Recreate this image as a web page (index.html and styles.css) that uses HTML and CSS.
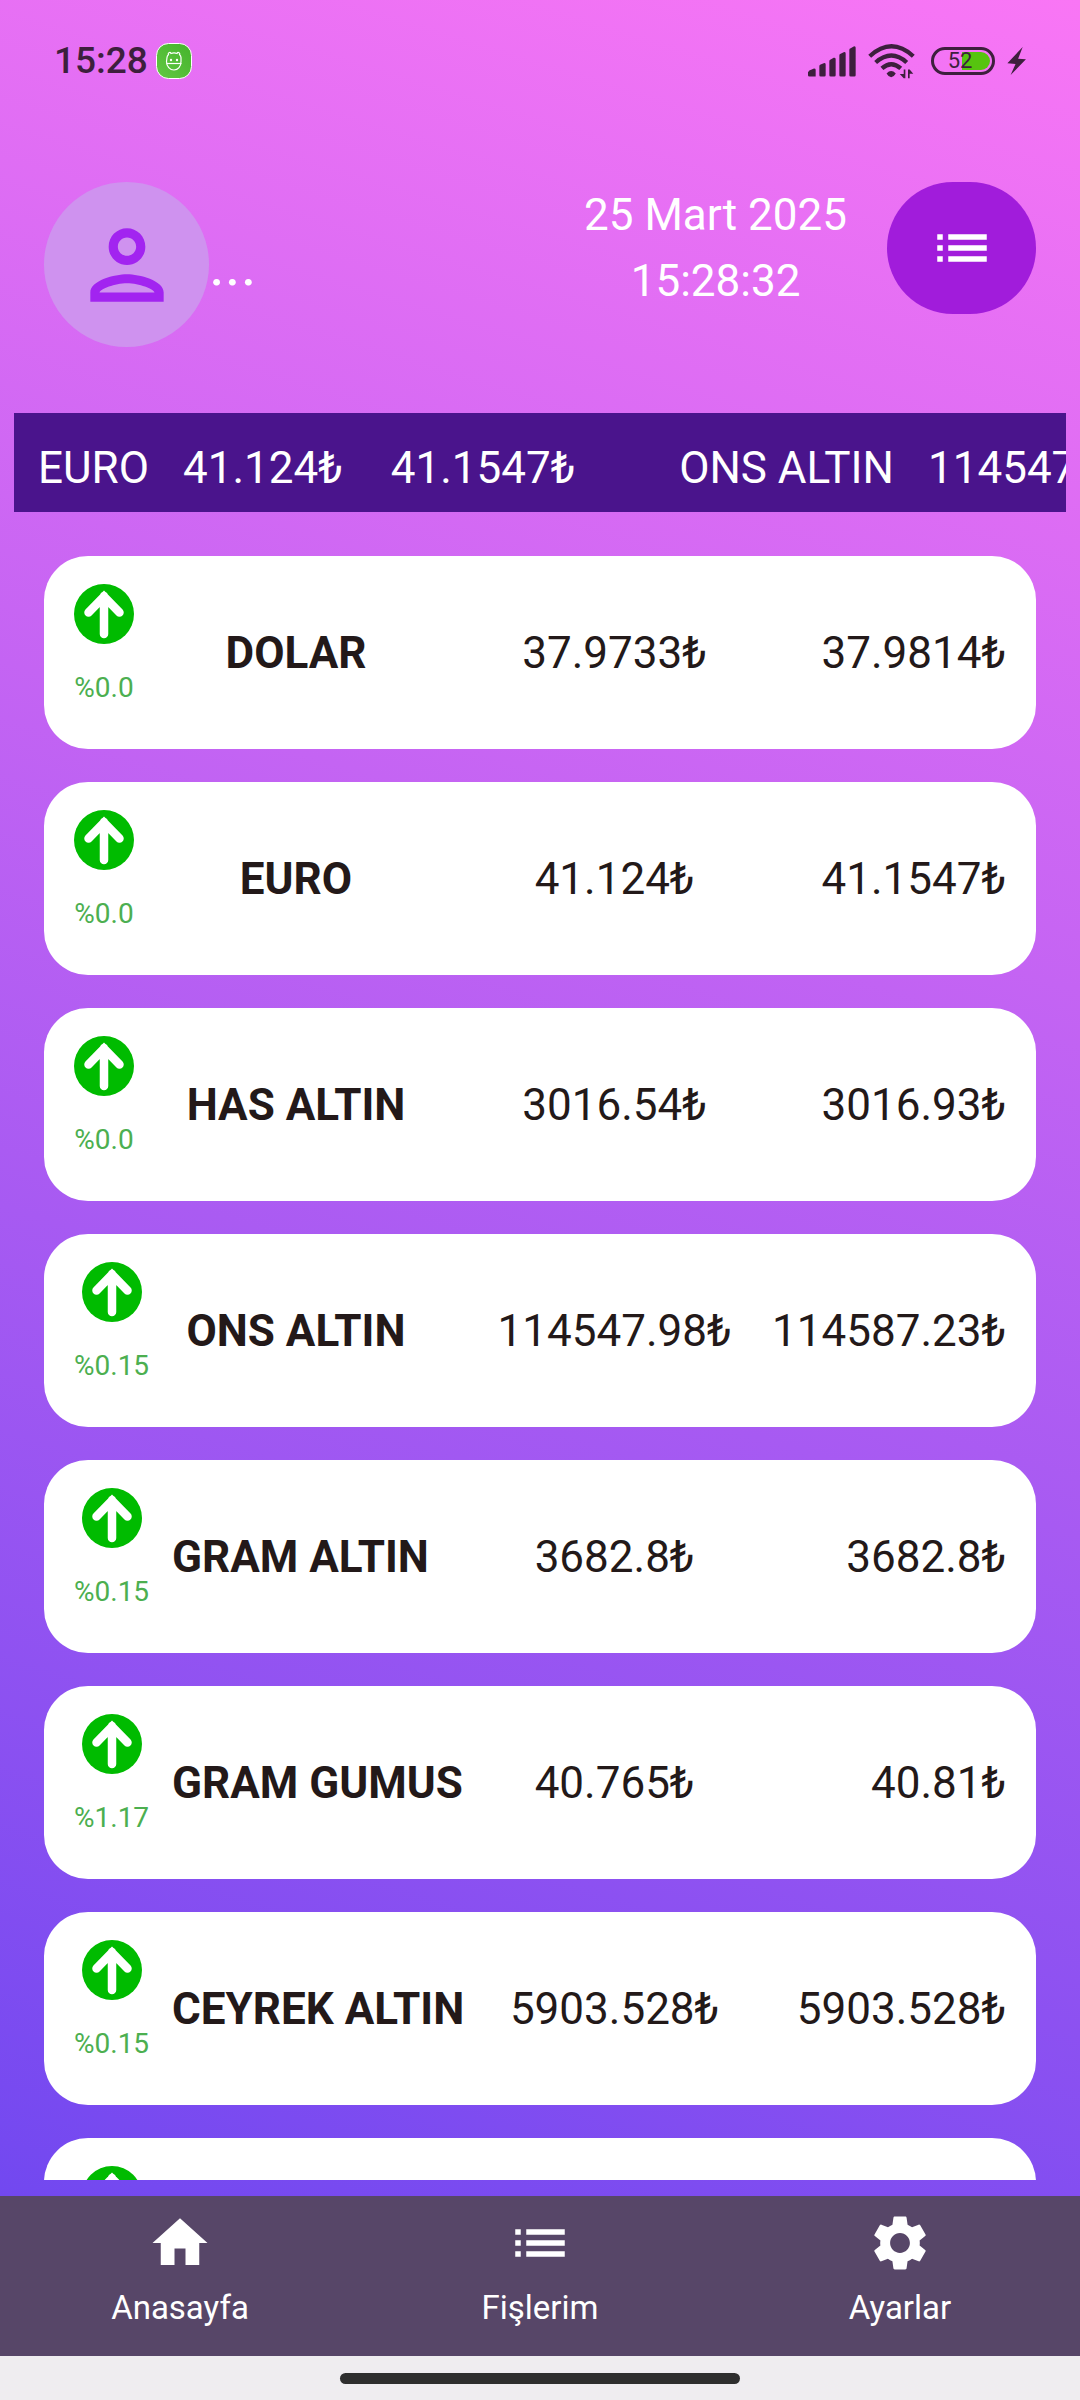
FILE: index.html
```html
<!DOCTYPE html>
<html lang="tr">
<head>
<meta charset="utf-8">
<meta name="viewport" content="width=device-width, initial-scale=1">
<title>Piyasalar</title>
<link rel="stylesheet" href="styles.css">
</head>
<body>
<svg class="defs" aria-hidden="true">
  <symbol id="icon-list" viewBox="0 0 24 24"><path d="M3 13h2v-2H3v2zm0 4h2v-2H3v2zm0-8h2V7H3v2zm4 4h14v-2H7v2zm0 4h14v-2H7v2zM7 7v2h14V7H7z"/></symbol>
  <symbol id="icon-up" viewBox="0 0 60 60"><circle cx="30" cy="30" r="30" fill="#00bb00"/><path d="M30 12v38M14.500 28.500 30 12.500l15.500 16" fill="none" stroke="#fff" stroke-width="8.500" stroke-linecap="round"/></symbol>
</svg>

<div class="screen">
  <div class="status-bar">
    <div class="status-group">
      <span class="status-time">15:28</span>
      <svg class="status-app" viewBox="0 0 36 36" aria-hidden="true">
        <defs><linearGradient id="app-green" x1="0" y1="1" x2="1" y2="0"><stop offset="0" stop-color="#62c843"/><stop offset="1" stop-color="#45b32c"/></linearGradient></defs>
        <rect x=".5" y=".5" width="35" height="35" rx="12" fill="url(#app-green)" stroke="#fff"/>
        <g fill="none" stroke="#fff" stroke-width="1.200"><path d="M11 14.500c0-1 1-2.500 1.500-3-1-1.500 1.500-3 2.500-1 1.500-.6 4.500-.6 6 0 1-2 3.500-.5 2.500 1 .5.5 1.500 2 1.500 3v4c0 5-3 8.500-7 8.500s-7.500-3.500-7.500-8.500z"/><path d="M10.500 20.500h15"/></g>
        <circle cx="15" cy="17" r="1.200" fill="#fff"/><circle cx="21" cy="17" r="1.200" fill="#fff"/>
      </svg>
    </div>
    <div class="status-group status-system">
      <svg class="status-signal" viewBox="54 46 144 92" aria-hidden="true"><path d="M54 124l4-5 14-6q5 0 5 4v20H58q-4 0-4-4zM88 106q0-4 4-5l9-4q6-1 6 4v32q0 4-4 4H92q-4 0-4-4zM118 91q0-4 4-5l9-5q6-1 6 4v48q0 4-4 4h-11q-4 0-4-4zM148 74q0-4 4-5l9-5q6-1 6 4v65q0 4-4 4h-11q-4 0-4-4zM178 57q0-4 4-5l9-5q6-2 6 4v82q0 4-4 4h-11q-4 0-4-4z"/></svg>
      <svg class="status-wifi" viewBox="236 40 140 106" aria-hidden="true"><g fill="none" stroke="#3d1f3d" stroke-width="13"><path d="M240 77q66-60 132 0"/><path d="M258 96q48-42 94 0"/><path d="M277 114q28-26 57 0"/></g><path d="M291 129q14-14 28 0l-6 8-8 4-8-4zM343 117h5v27h-5l-12-13h12zM356 117h5l11 13h-11v14h-5z"/></svg>
      <span class="status-battery"><span class="battery-level">52</span></span>
      <svg class="status-bolt" viewBox="648 48 58 86" aria-hidden="true"><path d="M696 48 649 98l25 2-15 34 47-48-24-2z"/></svg>
    </div>
  </div>

  <header class="header">
    <div class="profile">
      <button class="avatar" type="button" aria-label="Profil">
        <svg viewBox="0 0 24 24" aria-hidden="true"><path d="M12 6c1.100 0 2 .9 2 2s-.9 2-2 2-2-.9-2-2 .9-2 2-2m0 10c2.700 0 5.800 1.290 6 2H6c.23-.72 3.310-2 6-2m0-12C9.790 4 8 5.790 8 8s1.790 4 4 4 4-1.790 4-4-1.790-4-4-4zm0 10c-2.670 0-8 1.340-8 4v2h16v-2c0-2.660-5.330-4-8-4z"/></svg>
      </button>
      <span class="profile-name">...</span>
    </div>
    <div class="header-side">
      <time class="clock"><span>25 Mart 2025</span><span>15:28:32</span></time>
      <button class="menu-button" type="button" aria-label="Liste"><svg class="icon" aria-hidden="true"><use href="#icon-list"/></svg></button>
    </div>
  </header>

  <div class="ticker">
    <div class="ticker-item"><span class="ticker-name">EURO</span><span class="ticker-prices"><span>41.124₺</span><span>41.1547₺</span></span></div>
    <div class="ticker-item"><span class="ticker-name">ONS ALTIN</span><span class="ticker-prices"><span>114547.98₺</span><span>114587.23₺</span></span></div>
  </div>

  <ul class="rates">
    <li class="rate"><div class="trend"><svg class="trend-icon" aria-hidden="true"><use href="#icon-up"/></svg><span>%0.0</span></div><strong class="name">DOLAR</strong><span class="buy">37.9733₺</span><span class="sell">37.9814₺</span></li>
    <li class="rate"><div class="trend"><svg class="trend-icon" aria-hidden="true"><use href="#icon-up"/></svg><span>%0.0</span></div><strong class="name">EURO</strong><span class="buy">41.124₺</span><span class="sell">41.1547₺</span></li>
    <li class="rate"><div class="trend"><svg class="trend-icon" aria-hidden="true"><use href="#icon-up"/></svg><span>%0.0</span></div><strong class="name">HAS ALTIN</strong><span class="buy">3016.54₺</span><span class="sell">3016.93₺</span></li>
    <li class="rate"><div class="trend"><svg class="trend-icon" aria-hidden="true"><use href="#icon-up"/></svg><span>%0.15</span></div><strong class="name">ONS ALTIN</strong><span class="buy">114547.98₺</span><span class="sell">114587.23₺</span></li>
    <li class="rate"><div class="trend"><svg class="trend-icon" aria-hidden="true"><use href="#icon-up"/></svg><span>%0.15</span></div><strong class="name">GRAM ALTIN</strong><span class="buy">3682.8₺</span><span class="sell">3682.8₺</span></li>
    <li class="rate"><div class="trend"><svg class="trend-icon" aria-hidden="true"><use href="#icon-up"/></svg><span>%1.17</span></div><strong class="name">GRAM GUMUS</strong><span class="buy">40.765₺</span><span class="sell">40.81₺</span></li>
    <li class="rate"><div class="trend"><svg class="trend-icon" aria-hidden="true"><use href="#icon-up"/></svg><span>%0.15</span></div><strong class="name">CEYREK ALTIN</strong><span class="buy">5903.528₺</span><span class="sell">5903.528₺</span></li>
    <li class="rate rate-next"><div class="trend"><svg class="trend-icon" aria-hidden="true"><use href="#icon-up"/></svg></div></li>
  </ul>
</div>

<nav class="tabs">
  <a class="tab" href="#anasayfa"><svg class="icon" viewBox="0 0 24 24" aria-hidden="true"><path d="M10 20v-6h4v6h5v-8h3L12 3 2 12h3v8z"/></svg><span>Anasayfa</span></a>
  <a class="tab" href="#fislerim"><svg class="icon" aria-hidden="true"><use href="#icon-list"/></svg><span>Fişlerim</span></a>
  <a class="tab" href="#ayarlar"><svg class="icon" viewBox="0 0 24 24" aria-hidden="true"><path d="M19.140 12.940c.04-.3.06-.61.06-.94 0-.32-.02-.64-.07-.94l2.030-1.580c.18-.14.23-.41.12-.61l-1.920-3.320c-.12-.22-.37-.29-.59-.22l-2.390.96c-.5-.38-1.030-.7-1.620-.94l-.36-2.540c-.04-.24-.24-.41-.48-.41h-3.840c-.24 0-.43.17-.47.41l-.36 2.540c-.59.24-1.130.57-1.620.94l-2.390-.96c-.22-.08-.47 0-.59.22L2.740 8.870c-.12.21-.08.47.12.61l2.030 1.580c-.05.3-.09.63-.09.94s.02.64.07.94l-2.030 1.580c-.18.14-.23.41-.12.61l1.920 3.320c.12.22.37.29.59.22l2.390-.96c.5.38 1.030.7 1.620.94l.36 2.540c.05.24.24.41.48.41h3.840c.24 0 .44-.17.47-.41l.36-2.540c.59-.24 1.130-.56 1.620-.94l2.390.96c.22.08.47 0 .59-.22l1.920-3.320c.12-.22.07-.47-.12-.61l-2.010-1.580zM12 15.600c-1.980 0-3.600-1.620-3.600-3.600s1.620-3.600 3.600-3.600 3.600 1.620 3.600 3.600-1.620 3.600-3.600 3.600z"/></svg><span>Ayarlar</span></a>
</nav>
<div class="gesture-bar"><span class="gesture-pill"></span></div>
</body>
</html>
```
FILE: styles.css
```css
* {
  box-sizing: border-box;
}

body {
  display: flex;
  flex-direction: column;
  height: 100vh;
  margin: 0;
  font-family: Roboto, "Noto Sans", sans-serif;
  font-size: 44px;
  line-height: 66px;
  white-space: nowrap;
}

button {
  padding: 0;
  border: 0;
  font: inherit;
}

.defs {
  position: absolute;
  width: 0;
  height: 0;
}

.icon {
  width: 66px;
  height: 66px;
  fill: #fff;
}

.screen {
  display: flex;
  flex: 1;
  flex-direction: column;
  min-height: 0;
  padding-bottom: 16px;
  background: linear-gradient(197deg, #f976f5, #7248f0);
}

/* Status bar */

.status-bar {
  display: flex;
  align-items: center;
  justify-content: space-between;
  height: 120px;
  padding: 2px 54px 0;
  color: #3d1f3d;
  fill: #3d1f3d;
}

.status-group {
  display: flex;
  align-items: center;
  gap: 8px;
}

.status-system {
  gap: 12px;
}

.status-time {
  font-size: 37px;
  font-weight: 500;
}

.status-app {
  width: 36px;
  height: 36px;
}

.status-signal {
  width: 48px;
  height: 31px;
}

.status-wifi {
  width: 47px;
  height: 35px;
}

.status-battery {
  width: 64px;
  height: 28px;
  margin-left: 4px;
  padding: 2px;
  border: 3px solid #3d1f3d;
  border-radius: 14px;
}

.battery-level {
  display: block;
  height: 18px;
  padding-right: 6px;
  border-radius: 9px;
  background: linear-gradient(90deg, transparent 48%, #56c40f 48%);
  font-size: 22px;
  line-height: 18px;
  text-align: center;
}

.status-bolt {
  width: 19px;
  height: 28px;
}

/* Header */

.header {
  display: flex;
  justify-content: space-between;
  padding: 62px 44px 66px;
  color: #fff;
}

.profile {
  display: flex;
  align-items: center;
}

.avatar {
  display: grid;
  place-items: center;
  width: 165px;
  height: 165px;
  border-radius: 50%;
  background: #cf92ef;
}

.avatar svg {
  width: 110px;
  height: 110px;
  fill: #a224f0;
}

.profile-name {
  font-size: 60px;
}

.header-side {
  display: flex;
  align-items: flex-start;
  gap: 40px;
}

.clock {
  display: flex;
  flex-direction: column;
  text-align: center;
}

.menu-button {
  display: grid;
  place-items: center;
  width: 149px;
  height: 132px;
  border-radius: 66px;
  background: #a11cdb;
}

/* Scrolling price ticker */

.ticker {
  display: flex;
  flex-shrink: 0;
  gap: 104px;
  margin: 0 14px;
  padding: 22px 24px 11px;
  overflow: hidden;
  background: #4a148c;
  color: #fff;
}

.ticker-item {
  display: flex;
  gap: 34px;
}

.ticker-prices {
  display: flex;
  gap: 48px;
}

/* Rate cards */

.rates {
  display: flex;
  flex: 1;
  flex-direction: column;
  gap: 33px;
  min-height: 0;
  margin: 44px 44px 0;
  padding: 0;
  overflow-y: auto;
  scrollbar-width: none;
  list-style: none;
  color: #231919;
}

.rate {
  display: grid;
  flex-shrink: 0;
  grid-template-columns: 98px minmax(0, 308fr) minmax(0, 269fr) minmax(0, 257fr);
  align-items: center;
  padding: 28px 30px;
  border-radius: 44px;
  background: #fff;
}

.trend {
  display: flex;
  flex-direction: column;
  align-items: center;
  justify-self: start;
  gap: 11px;
  color: #4caf50;
  font-size: 28px;
}

.trend-icon {
  width: 60px;
  height: 60px;
}

.rate-next {
  padding: 28px 38px 105px;
}

.name {
  display: flex;
  justify-content: safe center;
  padding-right: 60px;
}

.buy {
  text-align: center;
}

.sell {
  text-align: right;
}

/* Bottom navigation */

.tabs {
  display: grid;
  grid-template-columns: repeat(3, 1fr);
  background: #574668;
}

.tab {
  display: flex;
  flex-direction: column;
  align-items: center;
  gap: 10px;
  padding: 14px 0 26px;
  color: #fff;
  font-size: 33px;
  line-height: 44px;
  text-decoration: none;
}

.gesture-bar {
  display: grid;
  place-items: center;
  height: 44px;
  background: #efedf0;
}

.gesture-pill {
  width: 400px;
  height: 11px;
  border-radius: 6px;
  background: #2e2e2e;
}
```
